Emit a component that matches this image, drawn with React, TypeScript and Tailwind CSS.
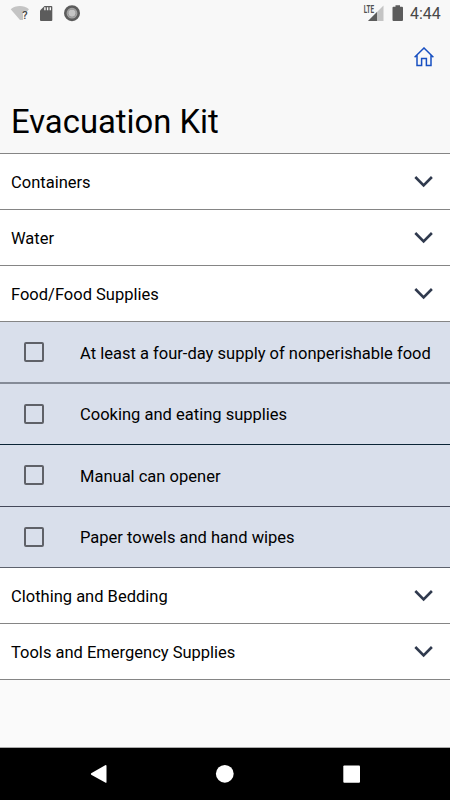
import React from "react";

type Item = { label: string; line: string; box: string };

const items: Item[] = [
  { label: "At least a four-day supply of nonperishable food", line: "h-[62px] border-b-2 border-[#858b97] pt-px", box: "mb-[2px]" },
  { label: "Cooking and eating supplies", line: "h-[61px] border-b border-[#0b2436]", box: "mb-0" },
  { label: "Manual can opener", line: "h-[62px] border-b border-[#44495a]", box: "mb-px" },
  { label: "Paper towels and hand wipes", line: "h-[61px] border-b border-[#5d626d]", box: "mb-0" },
];

function Section({ title }: { title: string }) {
  return (
    <button className="flex h-14 w-full items-center justify-between border-b border-[#858585] bg-white pl-[11px] pr-[17px] text-left">
      <span className="pt-[3px] text-[16.5px] leading-5">{title}</span>
      <svg className="h-[12px] w-[19px]" viewBox="0 0 19 12" fill="none" stroke="#303a4e" strokeWidth="2.6">
        <path d="M1.3 1 9.6 9.3 17.9 1" />
      </svg>
    </button>
  );
}

function CheckRow({ label, line, box }: Item) {
  return (
    <label className={"flex items-center bg-[#d9dfeb] pl-6 " + line}>
      <span className={"h-5 w-5 rounded-[2px] border-2 border-[#5f6168] " + box} />
      <span className="whitespace-nowrap pl-9 pt-[2px] text-[16.52px] leading-5">{label}</span>
    </label>
  );
}

export default function App() {
  return (
    <div className="flex h-[800px] w-[450px] flex-col overflow-hidden bg-[#fafafa] font-['Roboto',sans-serif] text-black">
      <header className="flex h-[154px] flex-col border-b border-[#858585] bg-[#f8f8f8]">
        <div className="flex h-7 items-center justify-between pl-[10px] pr-[9px]">
          <svg width="72" height="28" viewBox="0 0 72 28">
            <path d="M.7 9.2C5.7 4.9 14 4.9 19 9.2L16.5 12H13v8H10Z" fill="#c4c4c4" />
            <text x="12.3" y="19.2" fontSize="11" fontWeight="500" fill="#444" fontFamily="Roboto, sans-serif">?</text>
            <path d="M34.5 6H41.4Q42.3 6 42.3 7V20Q42.3 21 41.4 21H31Q30 21 30 20V10.5Z" fill="#5c5c5c" />
            <path d="M34.9 7.3v3M37.6 7.3v3M40.3 7.3v3" stroke="#f8f8f8" strokeWidth="1.4" />
            <circle cx="62" cy="13.2" r="6.7" fill="#a6a6a6" stroke="#5c5c5c" strokeWidth="2.6" />
            <circle cx="62" cy="13.2" r="4" fill="#c4c4c4" stroke="#959595" strokeWidth="1" />
          </svg>
          <div className="flex h-7 items-center">
            <svg width="42" height="28" viewBox="0 0 42 28">
              <path d="M20.5 5.5V21H5Z" fill="#c4c4c4" />
              <path d="M14 12V21H5Z" fill="#5c5c5c" />
              <path d="M0 4H11.5V13H0Z" fill="#f8f8f8" />
              <text x=".7" y="12.6" fontSize="10" textLength="10.3" lengthAdjust="spacingAndGlyphs" fontWeight="700" fill="#505050" fontFamily="Roboto, sans-serif">LTE</text>
              <path d="M32.5 5.2h4.5V6.7h2q1 0 1 1V20q0 1-1 1H30.5q-1 0-1-1V7.7q0-1 1-1h2Z" fill="#5c5c5c" />
            </svg>
            <span className="w-9 whitespace-nowrap pb-px pl-[5px] text-[15.9px] leading-5 text-[#484848]">4:44</span>
          </div>
        </div>
        <div className="flex h-[58px] items-center justify-end pr-4">
          <svg width="20" height="20" viewBox="0 0 20 20" fill="none" stroke="#174fc1" strokeWidth="1.5">
            <path d="M.6 10.2 10 1 19.4 10.2M3 8V18.4H7.6V11.4H12.4V18.4H17V8" />
          </svg>
        </div>
        <h1 className="pl-[11px] pt-[16px] text-[32.8px] leading-10">Evacuation Kit</h1>
      </header>
      <main className="flex grow flex-col">
        <Section title="Containers" />
        <Section title="Water" />
        <Section title="Food/Food Supplies" />
        {items.map((item) => (
          <CheckRow key={item.label} {...item} />
        ))}
        <Section title="Clothing and Bedding" />
        <Section title="Tools and Emergency Supplies" />
      </main>
      <nav className="flex h-[53px] shrink-0 items-center border-t border-[#aaa] bg-black">
        <svg width="450" height="52" viewBox="0 0 450 52" fill="#fff">
          <path d="M91.2 25.2 105.2 17.2Q106.5 16.8 106.5 18V34Q106.5 35.3 105.2 34.6L91.2 26.8Q90.5 26 91.2 25.2Z" />
          <circle cx="224.8" cy="25.8" r="8.9" />
          <rect x="343.3" y="17.4" width="16.7" height="17.3" rx="1" />
        </svg>
      </nav>
    </div>
  );
}
